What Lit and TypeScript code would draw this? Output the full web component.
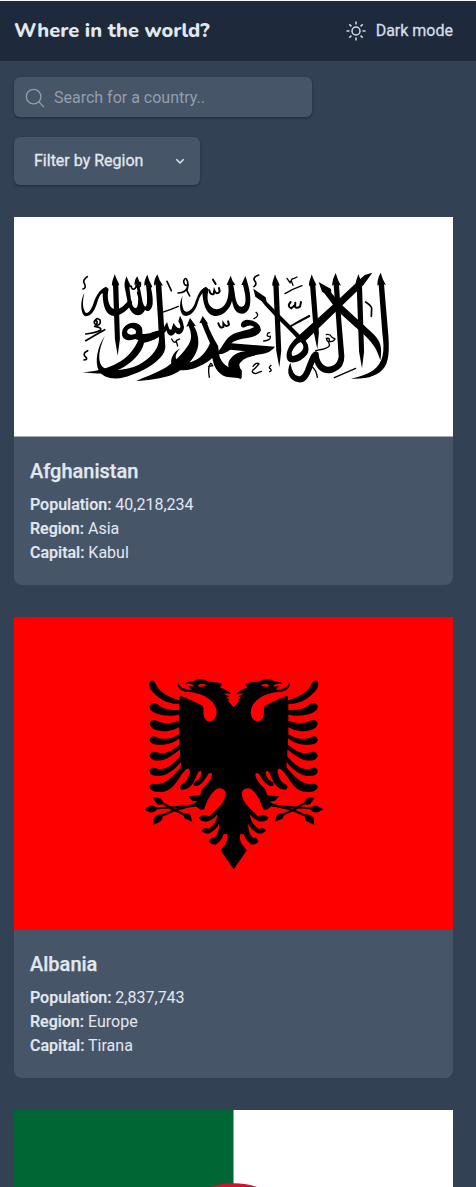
import { LitElement, html, css, svg, nothing } from "lit";
import { customElement, property } from "lit/decorators.js";

// A tall stem with a flared head that tapers to a point at the bottom.
const stem = (x: number, top: number, bottom: number, lean: number) => svg`
  <path d="M${x} ${top} C${x - 2} ${top + 11} ${x - 9} ${top + 20} ${x - 8} ${top + 36}
    L${x - 5} ${top + 33} L${x + lean * 0.75 - 6} ${bottom - 50} L${x + lean} ${bottom}
    L${x + lean * 0.75 + 9} ${bottom - 50} L${x + 11} ${top + 33} L${x + 14} ${top + 34}
    C${x + 12} ${top + 23} ${x + 4} ${top + 15} ${x} ${top}Z"></path>`;

const afghanistan = html`
  <svg class="flag" viewBox="0 0 1317 658.5" role="img" aria-label="Flag of Afghanistan">
    <rect width="1317" height="658.5" fill="#fff"></rect>
    <g transform="translate(168 129)">
      ${stem(134, 42, 287, 9)}
      <path d="M202 49Q192 60 194 76L199 73Q209 125 201 142Q191 150 184 126L178 82L184 80Q173 61 170 49Q162 66 164 80L175 137Q185 165 205 166Q218 164 225 150Q237 160 246 140Q252 124 243 83L247 80Q238 66 232 44Q222 60 223 77L228 74Q234 122 229 137Q224 146 218 126L208 76L213 74Q205 60 202 49Z"></path>
      <path d="M262 43Q251 60 252 77L257 73L264 178L267 238C267 266 240 298 205 315C170 331 118 336 99 322C79 303 89 259 106 226C81 260 74 307 86 331C98 355 132 360 163 352C211 339 284 303 286 261L280 166L274 76L279 77Q267 61 262 43Z"></path>
      <path d="M108 80C88 89 78 107 70 131C62 155 48 168 43 151C36 136 40 114 43 98C31 119 30 158 44 168C61 172 73 154 80 133C86 111 92 101 98 99C98 133 106 168 134 168C156 164 173 151 187 128L180 114C163 139 150 149 132 147C114 142 110 109 116 87Z"></path>
      <path d="M200 190C182 183 156 196 156 221C156 243 183 243 195 237L205 240C187 285 141 330 38 337C69 342 105 342 130 335C176 320 216 281 222 248C236 245 251 240 263 233C276 223 284 220 290 211C293 232 309 231 316 217C325 230 341 220 342 201Q340 183 330 167L325 184Q335 201 329 205Q318 204 311 188L306 202Q307 212 298 208L291 186L284 198Q281 210 256 214Q232 224 217 221Q220 196 200 190ZM185 204Q202 209 197 221Q176 229 171 217Q172 205 185 204Z" fill-rule="evenodd"></path>
      <path d="M360 174L349 200L356 198Q370 230 357 252C342 278 310 310 278 328C251 343 225 351 199 363C236 361 275 355 305 345C352 326 386 283 385 247Q385 218 371 197L378 199Z"></path>
      <path d="M398 168L388 190L394 188Q406 217 420 250C408 279 387 299 366 305C344 313 319 306 317 292Q316 281 331 265C305 278 294 311 314 325C346 342 397 320 427 294C432 326 449 349 479 352L515 355V332C485 331 460 318 449 291L444 257Q425 228 411 190L415 192Z"></path>
      <path d="M408 80C388 89 383 107 374 132C362 157 344 163 339 144Q333 128 338 107C326 130 329 156 340 166C359 174 377 153 383 130Q388 111 397 99C400 137 411 168 438 168C463 165 480 146 486 122C490 142 495 161 519 161C544 157 550 114 526 48L514 75L519 75Q533 126 521 138C504 147 497 124 494 98L490 75L496 74Q486 63 482 47L470 74L475 75C479 117 467 146 439 148C414 144 408 119 416 88Z"></path>
      <path d="M446 272C458 261 464 235 491 221Q505 216 538 208L553 201Q540 191 524 202C508 208 508 181 531 179Q570 182 573 211Q564 230 536 233Q496 238 484 250L615 260Q603 278 572 283C539 288 518 295 508 312Q507 324 515 331L513 357C475 346 466 311 483 295C492 282 510 275 527 274L481 269Q459 284 446 282Z"></path>
      <g fill="none" stroke="#000" stroke-width="5" stroke-linecap="round">
        <path d="M52 50Q36 62 43 70Q50 84 39 87"></path>
        <path d="M184 79Q184 89 193 87Q201 82 198 74Q203 88 211 78L211 68M203 98Q207 114 213 119"></path>
        <path d="M418 91Q421 106 431 102L433 91Q440 107 449 94L447 84M429 59L437 72" stroke-width="6"></path>
        <path d="M445 190Q450 207 460 201L460 190Q469 204 477 194L474 184" stroke-width="6"></path>
        <path d="M291 64L304 92M324 99Q350 99 354 76Q341 78 341 63Q347 47 353 65Q355 78 351 92L359 108"></path>
        <path d="M77 183Q78 170 90 180Q94 192 82 196Q68 190 75 181Q88 183 75 199Q96 203 92 210Q80 218 47 222M47 242Q74 226 104 209M53 272Q37 280 45 289Q57 298 42 300"></path>
        <path d="M274 158Q300 150 325 139M305 237Q313 254 320 241L329 237M319 244L323 258" stroke-width="4"></path>
        <path d="M418 352Q413 326 420 313Q423 306 428 317L416 319" stroke-width="4"></path>
      </g>
    </g>
    <g transform="translate(648 129)">
      ${stem(135, 43, 322, 13)}
      ${stem(245, 43, 268, 17)}
      ${stem(385, 42, 325, 11)}
      <path d="M452 38Q442 55 442 77L446 74L457 220C465 276 460 308 430 331Q407 347 363 356C413 358 446 347 464 321C481 297 477 245 473 202L462 73L468 76Q457 58 452 38Z"></path>
      <path d="M317 39Q307 56 306 77L311 74L319 185L326 290Q323 313 303 319C281 325 266 304 266 279Q257 266 244 284C230 308 224 350 206 349Q188 348 181 308C168 337 175 359 205 367C234 372 242 334 254 307C263 335 288 348 314 335Q344 323 343 288L334 182L327 75L333 77Q323 61 317 39Z"></path>
      <path d="M70 86L76 110L95 124C121 158 173 204 199 233C181 249 162 279 173 301C185 317 222 301 234 278Q239 258 227 242L401 74L427 38L404 45L315 128L209 224L110 125L107 112ZM212 246C232 263 212 283 188 288Q178 277 202 252Z" fill-rule="evenodd"></path>
      <path d="M266 66L276 95L283 100L319 148C359 190 408 224 429 254Q441 269 451 301C457 265 453 245 431 223L330 130L304 98L303 87Z"></path>
      <g fill="none" stroke="#000" stroke-width="5" stroke-linecap="round">
        <path d="M86 45Q68 52 73 61Q83 73 72 80"></path>
        <path d="M78 157Q90 167 72 176M101 243Q122 242 121 229Q107 231 114 219L119 218" stroke-width="4"></path>
        <path d="M69 319Q80 305 87 312L74 326Q58 337 77 341L94 334M123 316Q114 324 121 326Q127 331 119 335" stroke-width="4"></path>
        <path d="M171 55L180 68L186 57Q192 56 201 51M184 63L189 76M165 101Q190 86 216 77" stroke-width="4"></path>
        <path d="M182 126Q170 139 184 145L194 136Q196 148 210 140L213 126M196 128L195 139M183 198Q209 183 238 168" stroke-width="6"></path>
        <path d="M407 126Q422 136 425 144L424 169"></path>
        <path d="M289 224Q300 221 305 231L315 237Q309 249 292 243L289 235Q304 233 296 248Q305 261 281 267L257 272" stroke-width="4"></path>
        <path d="M248 322Q259 332 262 352M313 353L377 325" stroke-width="4"></path>
      </g>
    </g>
  </svg>`;

const halfEagle = svg`
  <path d="M281 111L264 91L269 87L258 81L268 78L250 68L273 70Q262 58 240 51L247 40Q224 33 207 34Q187 22 169 27L160 32Q143 31 134 40Q146 38 157 42L164 48L145 47L156 59L133 54Q119 51 115 37Q107 43 124 59L142 65L119 78V90L113 88C87 79 57 66 47 39Q38 24 29 34C22 48 36 63 52 77C71 93 95 101 117 100V119C91 119 66 116 54 102Q36 91 29 107C27 127 65 135 83 135Q102 137 117 132V151C92 160 68 161 51 151Q34 143 29 158C30 179 60 182 79 182Q99 181 117 170V191C94 205 70 209 51 201Q34 192 29 207C28 222 54 225 75 222Q98 219 118 203V223C96 241 74 255 50 245Q31 240 29 257C36 275 65 272 82 263Q103 251 120 237V258C100 280 74 304 47 293Q29 288 29 304C33 319 59 319 77 312Q103 300 123 274L122 291C103 314 78 341 49 341Q29 337 29 351C33 366 63 368 80 361C108 348 118 317 133 302Q147 286 150 303C145 321 138 338 124 342Q114 354 126 358C155 356 162 333 173 308Q184 293 185 310C180 326 171 331 165 334Q154 345 169 347C190 340 196 324 206 309Q219 303 215 318C209 336 194 348 187 355L180 374L145 377L157 391Q164 394 174 391L161 402L181 418L192 417C200 393 211 366 232 354Q252 350 257 367Q257 391 232 414Q216 428 208 438Q189 429 176 441Q181 455 202 453Q221 447 232 431Q230 460 205 475Q190 468 184 480Q192 491 208 489Q229 478 237 460Q239 484 224 501Q209 500 207 514Q216 525 229 521Q247 509 250 492L260 489Q267 510 251 527L242 540L281 596Z"></path>
  <path d="M117 77L142 64Q182 67 205 84Q229 101 230 126Q228 151 208 153Q189 150 190 122Q192 108 185 104Q150 87 122 76Z" fill="red"></path>
  <path d="M173 44Q186 37 200 44Q190 51 177 48Z" fill="red"></path>
  <g fill="none" stroke="#000" stroke-width="7">
    <path d="M172 401L105 418L53 441"></path>
    <path d="M55 393Q77 401 94 414L145 438"></path>
    <path d="M30 415L166 406" stroke-width="6"></path>
  </g>
  <path d="M38 381Q68 378 70 399Q56 408 48 397ZM12 416L31 406Q43 401 52 416Q40 430 25 424ZM39 463L41 442Q50 431 65 431Q73 448 56 456ZM157 454L152 434Q142 424 131 431Q130 446 143 448Z"></path>`;

const albania = html`
  <svg class="flag" viewBox="0 0 1317 940.7" role="img" aria-label="Flag of Albania">
    <rect width="1317" height="940.7" fill="red"></rect>
    <g transform="translate(378 160.5)">
      <g>${halfEagle}</g>
      <g transform="translate(562 0) scale(-1 1)">${halfEagle}</g>
      <path d="M276 105L281 111L286 105V588L281 596L276 588Z"></path>
    </g>
  </svg>`;

const algeria = html`
  <svg class="flag" viewBox="0 0 900 600" role="img" aria-label="Flag of Algeria">
    <rect width="900" height="600" fill="#fff"></rect>
    <rect width="450" height="600" fill="#063"></rect>
    <path d="M579.9 225a150 150 0 1 0 0 150a120 120 0 1 1 0-150M585.7 300L450 255.900L533.900 371.300V228.700L450 344.100Z" fill="#d21034"></path>
  </svg>`;

@customElement("country-card")
class CountryCard extends LitElement {
  @property({ attribute: false }) country: any;

  static styles = css`
    :host {
      display: block;
      overflow: hidden;
      border-radius: 0 0 8px 8px;
      background: #475569;
    }
    .flag { display: block; width: 100%; height: auto; }
    .body { padding: 20px 16px; }
    .name { margin: 0 0 8px; font-size: 20px; line-height: 28px; font-weight: 500; -webkit-text-stroke: 0.25px; }
    .row { margin: 0; font-size: 16px; line-height: 24px; }
    .label { font-weight: 500; -webkit-text-stroke: 0.2px; }
  `;

  render() {
    const c = this.country;
    return html`${c.flag}
      ${c.name
        ? html`<div class="body">
            <h2 class="name">${c.name}</h2>
            <p class="row"><span class="label">Population:</span> ${c.population}</p>
            <p class="row"><span class="label">Region:</span> ${c.region}</p>
            <p class="row"><span class="label">Capital:</span> ${c.capital}</p>
          </div>`
        : nothing}`;
  }
}

@customElement("app-root")
class AppRoot extends LitElement {
  static styles = css`
    :host {
      display: block;
      box-sizing: border-box;
      height: 1187px;
      overflow: hidden;
      border-top: 1px solid #f8fafc;
      background: #334155;
      color: #e2e8f0;
      font: 16px/24px Roboto, sans-serif;
    }
    .top {
      display: flex;
      align-items: center;
      justify-content: space-between;
      box-sizing: border-box;
      height: 60px;
      padding: 0 23px 0 14px;
      background: #1e293b;
    }
    .title {
      margin: 0;
      font: 800 20px/28px Nunito, "Open Sans", sans-serif;
    }
    .mode { display: flex; align-items: center; gap: 10px; color: #d5dde8; -webkit-text-stroke: 0.3px; }
    .mode svg { display: block; }
    .controls {
      display: flex;
      flex-direction: column;
      align-items: flex-start;
      gap: 20px;
      padding: 16px 14px 32px;
    }
    .search, .filter {
      display: flex;
      align-items: center;
      box-sizing: border-box;
      border-radius: 6px;
      background: #475569;
      box-shadow: 0 1px 3px rgba(0, 0, 0, 0.22), 0 1px 2px rgba(0, 0, 0, 0.15);
    }
    .search { width: 298px; height: 40px; padding: 1px 9px 0; gap: 7px; color: #959eac; }
    .filter { width: 186px; height: 48px; padding: 0 14px 0 20px; justify-content: space-between; }
    .filter-label { margin-top: -1px; -webkit-text-stroke: 0.3px; }
    .cards { display: grid; gap: 32px; padding: 0 23px 0 14px; }
  `;

  private countries = [
    { name: "Afghanistan", population: "40,218,234", region: "Asia", capital: "Kabul", flag: afghanistan },
    { name: "Albania", population: "2,837,743", region: "Europe", capital: "Tirana", flag: albania },
    { flag: algeria },
  ];

  render() {
    return html`
      <header class="top">
        <h1 class="title">Where in the world?</h1>
        <div class="mode">
          <svg width="20" height="20" viewBox="0 0 20 20" fill="none" stroke="currentColor" stroke-width="1.5">
            <circle cx="10" cy="10" r="4"></circle>
            <path d="M10 0.500V3.500M10 16.500V19.500M0.500 10H3.500M16.500 10H19.500M3.300 3.300L5.400 5.400M14.600 14.600L16.700 16.700M3.300 16.700L5.400 14.600M14.600 5.400L16.700 3.300"></path>
          </svg>
          <span>Dark mode</span>
        </div>
      </header>
      <section class="controls">
        <div class="search">
          <svg width="24" height="24" viewBox="0 0 24 24" fill="none" stroke="currentColor" stroke-width="1.25" stroke-linecap="round">
            <circle cx="10.600" cy="10.600" r="7.300"></circle>
            <path d="M15.900 15.900L20.500 20.500"></path>
          </svg>
          <span>Search for a country..</span>
        </div>
        <div class="filter">
          <span class="filter-label">Filter by Region</span>
          <svg width="12" height="12" viewBox="0 0 12 12" fill="none" stroke="currentColor" stroke-width="1.500">
            <path d="M2.300 4.300L6 8L9.700 4.300"></path>
          </svg>
        </div>
      </section>
      <main class="cards">
        ${this.countries.map((c) => html`<country-card .country=${c}></country-card>`)}
      </main>`;
  }
}
